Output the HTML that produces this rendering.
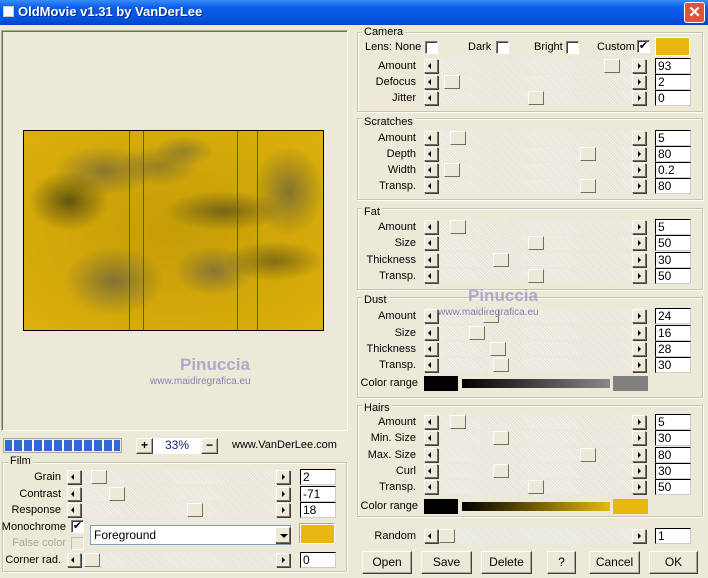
<!DOCTYPE html><html><head><meta charset="utf-8"><style>
*{box-sizing:border-box;margin:0;padding:0}
body{width:708px;height:578px;background:#ece9d8;font-family:"Liberation Sans",sans-serif;font-size:11px;color:#000;position:relative;overflow:hidden}
.a{position:absolute}
.tb{left:0;top:0;width:708px;height:25px;background:linear-gradient(#3a8cf8,#0a5ee8 30%,#0554e0 70%,#0345c8);}
.gb{position:absolute;border:1px solid #c8c4b0;box-shadow:1px 1px 0 #fff inset,1px 1px 0 #fff}
.gt{position:absolute;background:#ece9d8;padding:0 2px;font-size:11px}
.btn{position:absolute;width:14px;height:14px;background:#ece9d8;border:1px solid;border-color:#fff #716f64 #716f64 #fff;box-shadow:1px 1px 0 #404040}
.btn:after{content:"";position:absolute;top:3px;border:3px solid transparent}
.l:after{left:3px;border-right:3px solid #000;border-left:0}
.r:after{left:5px;border-left:3px solid #000;border-right:0}
.tr{position:absolute;height:14px;background:repeating-linear-gradient(45deg,#f4f3ee 0 1px,#e4e1d4 1px 2px)}
.th{position:absolute;width:16px;height:14px;background:#ece9d8;border:1px solid;border-color:#fff #716f64 #716f64 #fff}
.ed{position:absolute;width:36px;height:16px;background:#fff;border:1px solid #000;border-right-color:#ccc;border-bottom-color:#ccc;padding-left:2px;font-size:12px;line-height:14px}
.lb{position:absolute;text-align:right;font-size:11px}
.cb{position:absolute;width:13px;height:13px;background:#fff;border:1px solid #7f7f7f;border-right-color:#fff;border-bottom-color:#fff;box-shadow:inset 1px 1px 0 #404040;font-size:11px;line-height:11px;text-align:center}
.pb{position:absolute;height:23px;background:#ece9d8;border:1px solid;border-color:#fff #404040 #404040 #fff;box-shadow:inset -1px -1px 0 #aca899;text-align:center;line-height:21px;font-size:12px}
.wm{position:absolute;color:rgba(150,150,200,.75);font-weight:bold;z-index:10}
</style></head><body>
<div class="a tb"></div>
<div class="a" style="left:3px;top:6px;width:11px;height:11px;background:#fff;border:1px solid #ccc"></div>
<div class="a" style="left:18px;top:4px;color:#fff;font-weight:bold;font-size:13px;text-shadow:1px 1px #0a2a8a">OldMovie v1.31 by VanDerLee</div>
<div class="a" style="left:684px;top:2px;width:21px;height:21px;background:#e0543a;border:1px solid #fff;border-radius:3px;color:#fff;text-align:center;font-weight:bold;font-size:15px;line-height:19px">✕</div>

<div class="a" style="left:1px;top:30px;width:347px;height:401px;border:1px solid;border-color:#aca899 #fff #fff #aca899;box-shadow:inset 1px 1px 0 #716f64"></div>
<div class="a" style="left:23px;top:130px;width:301px;height:201px;border:1px solid #000;background:
radial-gradient(ellipse 40px 30px at 45px 70px,rgba(40,40,20,.65),transparent),
radial-gradient(ellipse 50px 25px at 80px 40px,rgba(80,80,80,.55),transparent),
radial-gradient(ellipse 35px 45px at 265px 60px,rgba(80,80,70,.6),transparent),
radial-gradient(ellipse 60px 20px at 200px 80px,rgba(50,50,30,.55),transparent),
radial-gradient(ellipse 50px 35px at 90px 150px,rgba(80,80,80,.6),transparent),
radial-gradient(ellipse 40px 25px at 190px 140px,rgba(80,80,90,.55),transparent),
radial-gradient(ellipse 40px 20px at 135px 35px,rgba(80,80,70,.45),transparent),
radial-gradient(ellipse 50px 20px at 250px 130px,rgba(50,50,30,.5),transparent),
radial-gradient(ellipse 30px 15px at 160px 20px,rgba(80,80,80,.45),transparent),
radial-gradient(ellipse at center,#c49d06,#ddb00c)"></div>
<div class="a" style="left:129px;top:131px;width:1px;height:199px;background:#6a5a10"></div>
<div class="a" style="left:143px;top:131px;width:1px;height:199px;background:#6a5a10"></div>
<div class="a" style="left:237px;top:131px;width:1px;height:199px;background:#6a5a10"></div>
<div class="a" style="left:257px;top:131px;width:1px;height:199px;background:#6a5a10"></div>
<div class="wm" style="left:180px;top:355px;font-size:17px">Pinuccia</div>
<div class="wm" style="left:150px;top:376px;font-size:10px;font-weight:normal;color:rgba(120,120,170,.9)">www.maidiregrafica.eu</div>

<div class="a" style="left:3px;top:438px;width:119px;height:15px;border:1px solid #aca899;background:repeating-linear-gradient(90deg,#3168d5 0 8px,#fff 8px 10px);background-clip:content-box;padding:1px"></div>
<div class="pb" style="left:136px;top:438px;width:17px;height:16px;line-height:13px;font-weight:bold">+</div>
<div class="a" style="left:153px;top:438px;width:48px;height:16px;background:#fff;color:#1a1a80;text-align:center;font-size:12px;line-height:15px">33%</div>
<div class="pb" style="left:201px;top:438px;width:17px;height:16px;line-height:13px;font-weight:bold">−</div>
<div class="a" style="left:232px;top:439px;font-size:11px">www.VanDerLee.com</div>

<div class="gb" style="left:2px;top:462px;width:345px;height:110px"></div>
<div class="gt" style="left:8px;top:455px">Film</div>
<div class="cb" style="left:71px;top:520px;line-height:10px">✔</div>
<div class="lb" style="left:0;top:521px;width:66px">Monochrome</div>
<div class="cb" style="left:71px;top:537px;border-color:#bbb #fff #fff #bbb;box-shadow:none;background:#ece9d8"></div>
<div class="lb" style="left:0;top:537px;width:66px;color:#aca899">False color</div>
<div class="a" style="left:90px;top:525px;width:201px;height:20px;background:#fff;border:1px solid #7f9db9;padding-left:3px;line-height:18px;font-size:12px">Foreground</div>
<div class="btn" style="left:275px;top:527px;width:15px;height:16px"></div>
<div class="a" style="left:280px;top:534px;border:4px solid transparent;border-top:4px solid #000;border-bottom:0"></div>
<div class="a" style="left:300px;top:524px;width:35px;height:20px;background:#e8b80e;border:1px solid #fff;box-shadow:-1px -1px 0 #aca899"></div>

<div class="gb" style="left:357px;top:32px;width:346px;height:80px"></div><div class="gt" style="left:362px;top:26px">Camera</div>
<div class="gb" style="left:357px;top:118px;width:346px;height:82px"></div><div class="gt" style="left:362px;top:116px">Scratches</div>
<div class="gb" style="left:357px;top:208px;width:346px;height:82px"></div><div class="gt" style="left:362px;top:206px">Fat</div>
<div class="gb" style="left:357px;top:297px;width:346px;height:101px"></div><div class="gt" style="left:362px;top:294px">Dust</div>
<div class="gb" style="left:357px;top:405px;width:346px;height:112px"></div><div class="gt" style="left:362px;top:402px">Hairs</div>

<div class="lb" style="left:365px;top:41px">Lens: None</div><div class="cb" style="left:425px;top:41px"></div>
<div class="lb" style="left:468px;top:41px">Dark</div><div class="cb" style="left:496px;top:41px"></div>
<div class="lb" style="left:534px;top:41px">Bright</div><div class="cb" style="left:566px;top:41px"></div>
<div class="lb" style="left:597px;top:41px">Custom</div><div class="cb" style="left:637px;top:40px;line-height:10px">✔</div>
<div class="a" style="left:655px;top:37px;width:35px;height:19px;background:#e8b80e;border:1px solid #fff"></div>

<div class="lb" style="left:360px;top:377px;width:58px">Color range</div>
<div class="a" style="left:424px;top:376px;width:34px;height:15px;background:#000"></div>
<div class="a" style="left:462px;top:379px;width:148px;height:9px;background:linear-gradient(90deg,#000,#888)"></div>
<div class="a" style="left:613px;top:376px;width:35px;height:15px;background:#808080"></div>
<div class="lb" style="left:360px;top:500px;width:58px">Color range</div>
<div class="a" style="left:424px;top:499px;width:34px;height:15px;background:#000"></div>
<div class="a" style="left:462px;top:502px;width:148px;height:9px;background:linear-gradient(90deg,#000,#e8b80e)"></div>
<div class="a" style="left:613px;top:499px;width:35px;height:15px;background:#e8b80e"></div>

<div class="wm" style="left:468px;top:286px;font-size:17px">Pinuccia</div>
<div class="wm" style="left:438px;top:307px;font-size:10px;font-weight:normal;color:rgba(120,120,170,.9)">www.maidiregrafica.eu</div>

<div class="pb" style="left:362px;top:551px;width:50px">Open</div>
<div class="pb" style="left:421px;top:551px;width:51px">Save</div>
<div class="pb" style="left:481px;top:551px;width:51px">Delete</div>
<div class="pb" style="left:547px;top:551px;width:29px">?</div>
<div class="pb" style="left:589px;top:551px;width:51px">Cancel</div>
<div class="pb" style="left:649px;top:551px;width:49px">OK</div>

<div id="s"></div>
<script>
var R=[
["Amount",59,604,"93",1],["Defocus",75,444,"2",1],["Jitter",91,528,"0",1],
["Amount",131,450,"5",1],["Depth",147,580,"80",1],["Width",163,444,"0.2",1],["Transp.",179,580,"80",1],
["Amount",220,450,"5",1],["Size",236,528,"50",1],["Thickness",253,493,"30",1],["Transp.",269,528,"50",1],
["Amount",309,483,"24",1],["Size",326,469,"16",1],["Thickness",342,490,"28",1],["Transp.",358,493,"30",1],
["Amount",415,450,"5",1],["Min. Size",431,493,"30",1],["Max. Size",448,580,"80",1],["Curl",464,493,"30",1],["Transp.",480,528,"50",1],
["Random",529,439,"1",1],
["Grain",470,91,"2",0],["Contrast",487,109,"-71",0],["Response",503,187,"18",0],["Corner rad.",553,84,"0",0]];
var h="";
R.forEach(function(r){var y=r[1];
if(r[4]){var L=424,RB=632,E=655,lw=416;}else{var L=67,RB=276,E=300,lw=61;}
h+='<div class="lb" style="left:0;width:'+lw+'px;top:'+(y+1)+'px">'+r[0]+'</div>';
h+='<div class="tr" style="left:'+(L+14)+'px;top:'+y+'px;width:'+(RB-L-14)+'px"></div>';
h+='<div class="btn l" style="left:'+L+'px;top:'+y+'px"></div><div class="btn r" style="left:'+RB+'px;top:'+y+'px"></div>';
h+='<div class="th" style="left:'+r[2]+'px;top:'+y+'px"></div>';
h+='<div class="ed" style="left:'+E+'px;top:'+(y-1)+'px">'+r[3]+'</div>';});
document.getElementById("s").innerHTML=h;
</script>
</body></html>
